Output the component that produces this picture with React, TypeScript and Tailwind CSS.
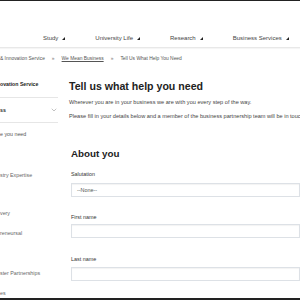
import React from 'react';
import { ChevronDown } from 'lucide-react';

const NAV = ['Study', 'University Life', 'Research', 'Business Services'];

function NavArrow() {
    return (
        <svg width="3" height="3" viewBox="0 0 3 3" className="ml-[4px] mt-[1px]">
            <polygon points="3,0 3,3 0,3" fill="#222" />
        </svg>
    );
}

export default function App() {
    return (
        <div className="w-[300px] h-[300px] overflow-hidden flex flex-col bg-white border-t border-[#222] border-b-2 border-b-[#222] font-['Liberation_Sans',Arial,sans-serif]">
            {/* Header space */}
            <div className="h-[27px] shrink-0" />

            {/* Main nav */}
            <nav className="h-[20px] shrink-0 flex items-center pl-[43px] gap-[30px] border-b border-[#e8e8e8] shadow-[0_1px_1px_rgba(0,0,0,0.04)] whitespace-nowrap">
                {NAV.map((item) => (
                    <div key={item} className="flex items-center text-[6px] leading-[8px] text-[#444]">
                        <span>{item}</span>
                        <NavArrow />
                    </div>
                ))}
            </nav>

            {/* Breadcrumb */}
            <div className="h-[19px] shrink-0 flex items-center gap-[7px] text-[4.9px] leading-[7px] text-[#555] whitespace-nowrap pt-[1px]">
                <span>&amp; Innovation Service</span>
                <span className="text-[#777]">»</span>
                <span className="underline text-[#555]">We Mean Business</span>
                <span className="text-[#777]">»</span>
                <span>Tell Us What Help You Need</span>
            </div>

            <div className="flex flex-1 min-h-0">
                {/* Sidebar */}
                <aside className="w-[58px] shrink-0 flex flex-col whitespace-nowrap overflow-hidden">
                    <div className="h-[31px] shrink-0 flex items-center pt-[4px] border-b border-[#e6e6e6] text-[5.2px] leading-[8px] font-bold text-[#222]">
                        ovation Service
                    </div>
                    <div className="h-[25px] shrink-0 flex items-center justify-between border-b border-[#e6e6e6] text-[5.2px] leading-[8px] font-bold text-[#222]">
                        <span>ss</span>
                        <ChevronDown size={8} strokeWidth={1.1} className="text-[#555]" />
                    </div>
                    <div className="mt-[7px] text-[5.3px] leading-[8px] text-[#555]">e you need</div>
                    <div className="mt-[33px] text-[5.3px] leading-[8px] text-[#666]">stry Expertise</div>
                    <div className="mt-[30px] text-[5.3px] leading-[8px] text-[#666]">very</div>
                    <div className="mt-[12px] text-[5.3px] leading-[8px] text-[#666]">reneursal</div>
                    <div className="mt-[32px] text-[5.3px] leading-[8px] text-[#666]">ster Partnerships</div>
                    <div className="mt-[12px] text-[5.3px] leading-[8px] text-[#666]">es</div>
                </aside>

                {/* Main content */}
                <main className="ml-[11px] flex-1 min-w-0 flex flex-col whitespace-nowrap">
                    <h1 className="mt-[13px] text-[10.6px] leading-[12px] font-bold text-[#222]">
                        Tell us what help you need
                    </h1>
                    <p className="mt-[7px] text-[5.6px] leading-[7px] text-[#444]">
                        Wherever you are in your business we are with you every step of the way.
                    </p>
                    <p className="mt-[7px] text-[5.6px] leading-[7px] text-[#444]">
                        Please fill in your details below and a member of the business partnership team will be in touch.
                    </p>
                    <div className="mt-[21px] h-px bg-[#e6e6e6] -ml-[1px]" />

                    <form className="pl-[2px] flex flex-col">
                        <h2 className="mt-[7px] text-[9.8px] leading-[11px] font-bold text-[#222]">About you</h2>

                        <label className="mt-[12px] text-[5.4px] leading-[7px] text-[#333]">Salutation</label>
                        <div className="mt-[5px] h-[14px] shrink-0 border border-[#dde1e6] shadow-[inset_0_1px_1px_rgba(0,0,0,0.05)] flex items-center pl-[5px] text-[5.4px] text-[#555]">
                            --None--
                        </div>

                        <label className="mt-[17px] text-[5.4px] leading-[7px] text-[#333]">First name</label>
                        <div className="mt-[3px] h-[14px] shrink-0 border border-[#dde1e6] shadow-[inset_0_1px_1px_rgba(0,0,0,0.05)]" />

                        <label className="mt-[18px] text-[5.4px] leading-[7px] text-[#333]">Last name</label>
                        <div className="mt-[4px] h-[14px] shrink-0 border border-[#dde1e6] shadow-[inset_0_1px_1px_rgba(0,0,0,0.05)]" />

                        <label className="mt-[18px] text-[5.4px] leading-[7px] text-[#333]">Job title</label>
                    </form>
                </main>
            </div>
        </div>
    );
}
